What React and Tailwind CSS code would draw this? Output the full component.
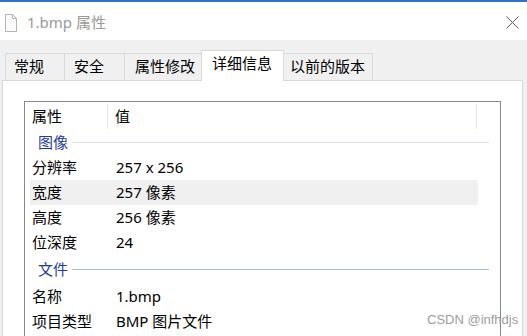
import React from 'react';

const font = { fontFamily: '"Noto Sans", "Noto Sans CJK SC", sans-serif' };

function DocIcon() {
  return (
    <svg width="12" height="18" viewBox="0 0 12 18" className="shrink-0">
      <path d="M0.5 0.5 H7.5 L11.5 4.5 V17.5 H0.5 Z" fill="#fbfbfb" stroke="#b4b4b4" />
      <path d="M7.5 0.5 V4.5 H11.5" fill="none" stroke="#b4b4b4" />
    </svg>
  );
}

function CloseIcon() {
  return (
    <svg width="13" height="13" viewBox="0 0 13 13">
      <path d="M0.5 0.5 L12.5 12.5 M12.5 0.5 L0.5 12.5" stroke="#5a5a5a" strokeWidth="1" />
    </svg>
  );
}

const tabs = [
  { label: '常规', w: 'w-[59px]', pl: 'pl-[8px]' },
  { label: '安全', w: 'w-[60px]', pl: 'pl-[9px]' },
  { label: '属性修改', w: 'w-[77px]', pl: 'pl-[10px]' },
];

function Row({ name, value, highlight }) {
  return (
    <div className={`flex items-center h-[25px] ${highlight ? 'bg-[#f0f0f0] ml-[5px] w-[448px]' : ''}`}>
      <span className={`${highlight ? 'pl-[2px] w-[86px]' : 'pl-[7px] w-[91px]'} shrink-0`}>{name}</span>
      <span>{value}</span>
    </div>
  );
}

function Group({ label, line, h }) {
  return (
    <div className={`flex items-center ${h} pl-[13px]`}>
      <span className="text-[#1e3c9a]">{label}</span>
      <div className={`ml-[4px] h-px w-[417px] ${line}`} />
    </div>
  );
}

export default function App() {
  return (
    <div className="w-[527px] h-[336px] overflow-hidden relative flex flex-col bg-[#f0f0f0] text-[15px] text-black" style={font}>
      <div className="h-[2px] bg-[#2b72c9] shrink-0" />

      {/* title bar */}
      <div className="h-[38px] bg-white flex items-center pl-[5px] pr-[8px] shrink-0">
        <div className="mt-[3px]"><DocIcon /></div>
        <span className="ml-[10px] text-[15px] text-[#9a9a9a] mt-[2px]">1.bmp 属性</span>
        <div className="ml-auto mt-[3px]"><CloseIcon /></div>
      </div>

      {/* tabs */}
      <div className="flex items-end pl-[5px] pt-[10px] h-[41px] shrink-0">
        {tabs.map((t) => (
          <div key={t.label} className={`${t.w} ${t.pl} h-[28px] border-l border-t border-[#d9d9d9] bg-[#f0f0f0] flex items-center pb-[3px]`}>
            {t.label}
          </div>
        ))}
        <div className="w-[83px] h-[31px] pl-[10px] border-l border-r border-t border-[#d9d9d9] bg-white flex items-center pb-[6px] relative z-10">
          详细信息
        </div>
        <div className="w-[89px] h-[28px] pl-[6px] border-t border-r border-[#d9d9d9] bg-[#f0f0f0] flex items-center pb-[3px]">
          以前的版本
        </div>
      </div>

      {/* panel */}
      <div className="-mt-px ml-[2px] w-[521px] flex-1 bg-white border border-[#d9d9d9] border-b-0">
        <div className="ml-[21px] mt-[20px] w-[477px] h-[260px] border border-[#828790] border-b-0">
          <div className="flex items-center h-[28px] relative">
            <span className="pl-[7px] w-[83px] h-[25px] flex items-center border-r border-[#e5e5e5]">属性</span>
            <span className="pl-[7px] w-[369px] h-[25px] flex items-center border-r border-[#e5e5e5]">值</span>
          </div>
          <Group label="图像" line="bg-[#dde4ee]" h="h-[25px]" />
          <Row name="分辨率" value="257 x 256" />
          <Row name="宽度" value="257 像素" highlight />
          <Row name="高度" value="256 像素" />
          <Row name="位深度" value="24" />
          <Group label="文件" line="bg-[#a7bde2]" h="h-[29px]" />
          <Row name="名称" value="1.bmp" />
          <Row name="项目类型" value="BMP 图片文件" />
        </div>
      </div>

      <div className="absolute left-[427px] top-[310px] text-[13px] text-[#9d9d9d]" style={{ fontFamily: '"Liberation Sans", Arial, sans-serif' }}>
        CSDN @infhdjs
      </div>
    </div>
  );
}
